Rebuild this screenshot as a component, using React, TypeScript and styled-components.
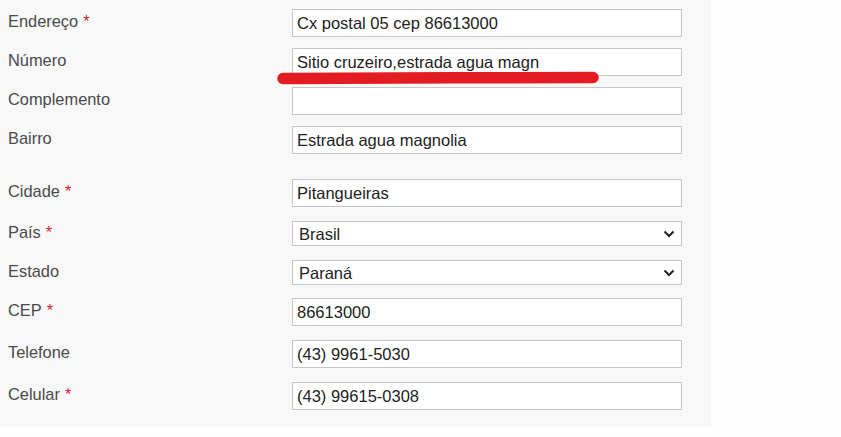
import React from "react";
import styled, { createGlobalStyle } from "styled-components";

type Field = {
  label: string;
  required?: boolean;
  value: string;
  select?: boolean;
  gap: number;
};

const fields: Field[] = [
  { label: "Endereço", required: true, value: "Cx postal 05 cep 86613000", gap: 0 },
  { label: "Número", value: "Sitio cruzeiro,estrada agua magn", gap: 11 },
  { label: "Complemento", value: "", gap: 11 },
  { label: "Bairro", value: "Estrada agua magnolia", gap: 11 },
  { label: "Cidade", required: true, value: "Pitangueiras", gap: 25 },
  { label: "País", required: true, value: "Brasil", select: true, gap: 14 },
  { label: "Estado", value: "Paraná", select: true, gap: 14 },
  { label: "CEP", required: true, value: "86613000", gap: 13 },
  { label: "Telefone", value: "(43) 9961-5030", gap: 14 },
  { label: "Celular", required: true, value: "(43) 99615-0308", gap: 14 },
];

const App: React.FC = () => {
  return (
    <>
      <GlobalStyle />
      <Page>
        <Panel>
          {fields.map((f) => (
            <Row key={f.label} $gap={f.gap}>
              <Label>
                {f.label}
                {f.required && <Star>*</Star>}
              </Label>
              {f.select ? (
                <SelectWrap>
                  <Select defaultValue={f.value}>
                    <option>{f.value}</option>
                  </Select>
                  <Chevron width="12" height="8" viewBox="0 0 12 8">
                    <path d="M1.5 1.5 L6 6 L10.5 1.5" fill="none" stroke="#222" strokeWidth="2" />
                  </Chevron>
                </SelectWrap>
              ) : (
                <TextInput type="text" readOnly defaultValue={f.value} />
              )}
            </Row>
          ))}
          {/* red hand-drawn underline over the Número field */}
          <Mark width="330" height="20" viewBox="0 0 330 20">
            <path d="M8 10.5 C 100 10, 220 9.5, 318 9.5" fill="none" stroke="#e31c23" strokeWidth="11.5" strokeLinecap="round" />
          </Mark>
        </Panel>
      </Page>
    </>
  );
};

const GlobalStyle = createGlobalStyle`
  html, body {
    margin: 0;
    padding: 0;
    background: #fefefe;
  }
  body {
    font-family: "Liberation Sans", Arial, sans-serif;
  }
`;

const Page = styled.div`
  width: 841px;
  height: 437px;
  overflow: hidden;
  background: #fefefe;
`;

const Panel = styled.div`
  position: relative;
  width: 711px;
  box-sizing: border-box;
  padding: 9px 0 17px 8px;
  background: #f8f8f8;
`;

const Row = styled.div<{ $gap: number }>`
  display: flex;
  align-items: center;
  margin-top: ${(p) => p.$gap}px;
`;

const Label = styled.div`
  width: 284px;
  flex-shrink: 0;
  font-size: 16.4px;
  color: #4a4a4a;
  padding-bottom: 3px;
`;

const Star = styled.span`
  color: #d9262c;
  margin-left: 5px;
`;

const TextInput = styled.input`
  box-sizing: border-box;
  width: 390px;
  height: 28px;
  margin: 0;
  padding: 0 4px;
  border: 1px solid #c6c6c6;
  border-radius: 0;
  background: #fff;
  font-family: "Liberation Sans", Arial, sans-serif;
  font-size: 16.5px;
  color: #222;
  outline: none;
`;

const SelectWrap = styled.div`
  position: relative;
  width: 390px;
  height: 25px;
`;

const Select = styled.select`
  appearance: none;
  box-sizing: border-box;
  width: 100%;
  height: 100%;
  margin: 0;
  padding: 0 6px;
  border: 1px solid #c6c6c6;
  border-radius: 0;
  background: #fff;
  font-family: "Liberation Sans", Arial, sans-serif;
  font-size: 16.5px;
  color: #222;
  outline: none;
`;

const Chevron = styled.svg`
  position: absolute;
  right: 7px;
  top: 9px;
  pointer-events: none;
`;

const Mark = styled.svg`
  position: absolute;
  left: 275px;
  top: 68px;
`;

export default App;
